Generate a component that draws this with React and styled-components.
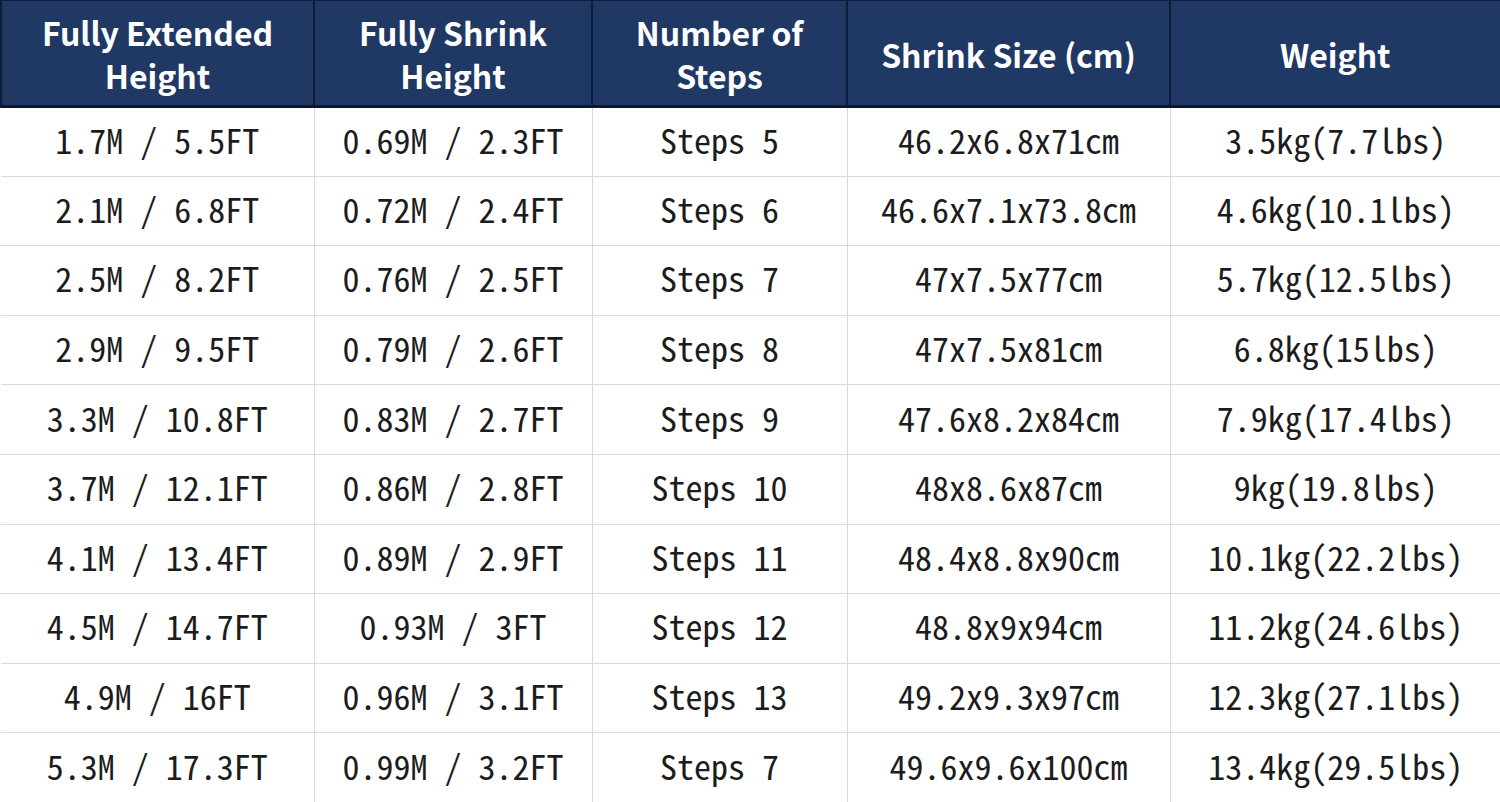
import React from 'react';
import styled, { createGlobalStyle } from 'styled-components';

const GlobalStyle = createGlobalStyle`
  html, body {
    margin: 0;
    padding: 0;
    background: #fff;
  }
`;

const COLUMNS = [313, 278, 255, 323, 331];

const HEADERS = [
  ['Fully Extended', 'Height'],
  ['Fully Shrink', 'Height'],
  ['Number of', 'Steps'],
  ['Shrink Size (cm)'],
  ['Weight'],
];

const ROWS = [
  ['1.7M / 5.5FT', '0.69M / 2.3FT', 'Steps 5', '46.2x6.8x71cm', '3.5kg(7.7lbs)'],
  ['2.1M / 6.8FT', '0.72M / 2.4FT', 'Steps 6', '46.6x7.1x73.8cm', '4.6kg(10.1lbs)'],
  ['2.5M / 8.2FT', '0.76M / 2.5FT', 'Steps 7', '47x7.5x77cm', '5.7kg(12.5lbs)'],
  ['2.9M / 9.5FT', '0.79M / 2.6FT', 'Steps 8', '47x7.5x81cm', '6.8kg(15lbs)'],
  ['3.3M / 10.8FT', '0.83M / 2.7FT', 'Steps 9', '47.6x8.2x84cm', '7.9kg(17.4lbs)'],
  ['3.7M / 12.1FT', '0.86M / 2.8FT', 'Steps 10', '48x8.6x87cm', '9kg(19.8lbs)'],
  ['4.1M / 13.4FT', '0.89M / 2.9FT', 'Steps 11', '48.4x8.8x90cm', '10.1kg(22.2lbs)'],
  ['4.5M / 14.7FT', '0.93M / 3FT', 'Steps 12', '48.8x9x94cm', '11.2kg(24.6lbs)'],
  ['4.9M / 16FT', '0.96M / 3.1FT', 'Steps 13', '49.2x9.3x97cm', '12.3kg(27.1lbs)'],
  ['5.3M / 17.3FT', '0.99M / 3.2FT', 'Steps 7', '49.6x9.6x100cm', '13.4kg(29.5lbs)'],
];

const Table = styled.table`
  width: 1500px;
  table-layout: fixed;
  border-collapse: collapse;
`;

const HeadRow = styled.tr`
  height: 106px;
  background: #203864;
  border-bottom: 3px solid #0b1631;
`;

const HeadCell = styled.th`
  padding: 2px 0 0;
  border-left: 2px solid #0f1d3c;
  border-top: 1px solid #0f1d3c;
  color: #fff;
  font-family: 'Noto Sans CJK SC', 'Noto Sans', sans-serif;
  font-weight: 700;
  font-size: 32px;
  line-height: 43px;
  text-align: center;
  vertical-align: middle;

  &:last-child {
    border-right: 3px solid #0f1d3c;
  }
`;

const BodyRow = styled.tr`
  height: 69.6px;
  border-bottom: 1px solid #dadada;
`;

const Cell = styled.td`
  padding: 0 0 5px;
  border-left: 1px solid #dadada;
  color: #1c1c1c;
  font-family: 'Noto Sans Mono CJK SC', 'DejaVu Sans Mono', monospace;
  font-size: 34px;
  text-align: center;
  vertical-align: middle;
  white-space: nowrap;

  &:first-child {
    border-left: none;
  }
`;

export default function App() {
  return (
    <>
      <GlobalStyle />
      <Table>
        <colgroup>
          {COLUMNS.map((w, i) => (
            <col key={i} style={{ width: w }} />
          ))}
        </colgroup>
        <thead>
          <HeadRow>
            {HEADERS.map((lines, i) => (
              <HeadCell key={i}>
                {lines.map((l, j) => (
                  <div key={j}>{l}</div>
                ))}
              </HeadCell>
            ))}
          </HeadRow>
        </thead>
        <tbody>
          {ROWS.map((row, i) => (
            <BodyRow key={i}>
              {row.map((v, j) => (
                <Cell key={j}>{v}</Cell>
              ))}
            </BodyRow>
          ))}
        </tbody>
      </Table>
    </>
  );
}
